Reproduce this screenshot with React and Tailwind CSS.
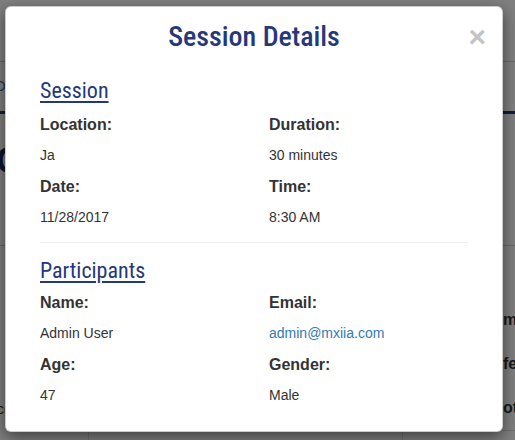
import { useState } from "react";

const NAVY = "text-[#25387a]";

const session = [
  { label: "Location:", value: "Ja" },
  { label: "Duration:", value: "30 minutes" },
  { label: "Date:", value: "11/28/2017" },
  { label: "Time:", value: "8:30 AM" },
];

const participant = [
  { label: "Name:", value: "Admin User" },
  { label: "Email:", value: "admin@mxiia.com", link: true },
  { label: "Age:", value: "47" },
  { label: "Gender:", value: "Male" },
];

const DetailGrid = ({ items }) => (
  <div className="grid grid-cols-[229px_1fr]">
    {items.map((item, i) => (
      <div key={i}>
        <p className="text-[16px] leading-[31px] font-bold text-[#333]">{item.label}</p>
        {item.link ? (
          <a href="#" className="block text-[14px] leading-[31px] text-[#337ab7]">
            {item.value}
          </a>
        ) : (
          <p className="text-[14px] leading-[31px] text-[#333]">{item.value}</p>
        )}
      </div>
    ))}
  </div>
);

const SectionTitle = ({ children }) => (
  <h3
    className={`self-start text-[22px] leading-[26px] ${NAVY} underline decoration-2 underline-offset-[3px]`}
    style={{ fontFamily: '"Roboto Condensed", Roboto, sans-serif', fontStretch: "condensed" }}
  >
    {children}
  </h3>
);

// the page that sits behind the dialog
const BackgroundPage = () => (
  <div className="flex h-[440px] w-[515px] flex-col bg-white font-['Liberation_Sans',Arial,sans-serif] text-[#333]">
    <div className="h-[62px] shrink-0 border-b border-[#ccc]" />
    <div className="flex h-[52px] shrink-0 items-center border-b-[3px] border-[#25387a]">
      <span className="-ml-[6px] text-[15px] text-[#337ab7]">Overview</span>
    </div>
    <div className="flex h-[132px] shrink-0 items-start border-b border-[#ccc] pt-[20px]">
      <span className="-ml-[4px] text-[36px] font-bold text-[#1d2b5c]">Coaching</span>
    </div>
    <div className="flex grow">
      <div className="flex w-[88px] flex-col justify-end pb-[20px]">
        <span className="-ml-[3px] text-[14px]">co</span>
      </div>
      <div className="flex grow flex-col justify-end">
        <div className="flex h-[10px] border-t border-[#ddd]">
          <div className="w-[315px] border-x border-[#ddd] pl-[17px] pt-[4px] text-[15px] font-bold">
            Average bubble duration: 10.00
          </div>
          <div className="pl-[15px] pt-[4px] text-[15px] font-bold">Rate</div>
        </div>
      </div>
    </div>
    <div className="absolute left-[503px] top-[308px] flex flex-col gap-[20px] text-[16px] font-bold">
      <span>m</span>
      <span>fe</span>
      <span>ot</span>
    </div>
  </div>
);

export default function App() {
  const [open, setOpen] = useState(true);

  return (
    <div className="relative h-[440px] w-[515px] overflow-hidden">
      <BackgroundPage />
      {open && (
        <div className="absolute inset-0 bg-black/50">
          <div className="absolute left-[5px] top-[6px] flex h-[426px] w-[498px] flex-col rounded-[6px] border border-black/20 bg-white px-[34px] pt-[14px] shadow-[0_5px_15px_rgba(0,0,0,0.5)] font-['Liberation_Sans',Arial,sans-serif]">
            <div className="relative flex justify-center">
              <h2
                className={`text-[28px] leading-[32px] font-medium ${NAVY}`}
                style={{ fontFamily: '"Roboto Condensed", Roboto, sans-serif', fontStretch: "condensed" }}
              >
                Session Details
              </h2>
              <button
                onClick={() => setOpen(false)}
                className="absolute right-[-18px] top-0 text-[30px] leading-[32px] font-bold text-[#c4c4c4]"
              >
                ×
              </button>
            </div>

            <div className="mt-[25px] flex flex-col">
              <SectionTitle>Session</SectionTitle>
              <div className="mt-[5px]">
                <DetailGrid items={session} />
              </div>
            </div>

            <hr className="mt-[9px] border-t border-[#eee]" />

            <div className="mt-[15px] flex flex-col">
              <SectionTitle>Participants</SectionTitle>
              <div className="mt-[3px]">
                <DetailGrid items={participant} />
              </div>
            </div>
          </div>
        </div>
      )}
    </div>
  );
}
